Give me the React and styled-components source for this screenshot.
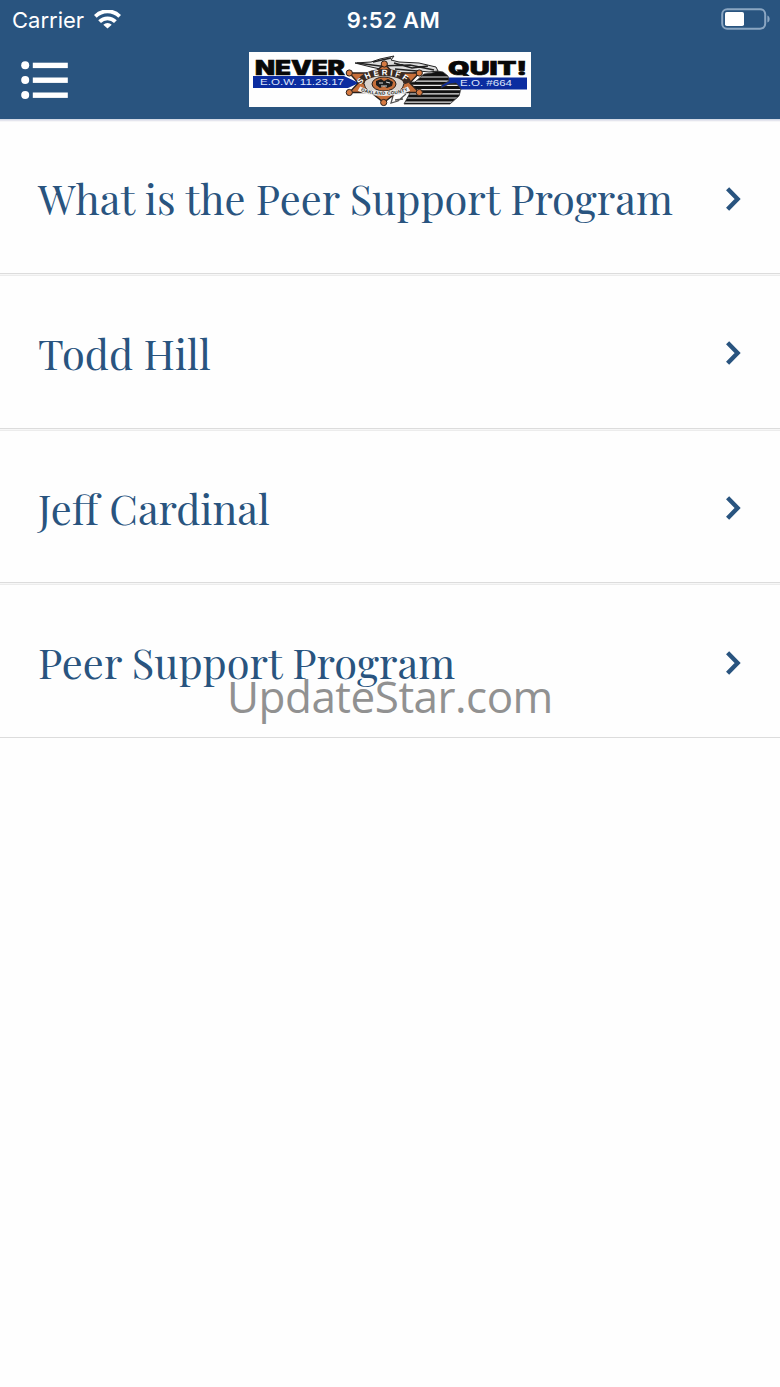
import React from 'react';
import styled, { createGlobalStyle } from 'styled-components'

const GlobalStyle=createGlobalStyle`
* { box-sizing: border-box; }
body {
    margin: 0;
    background: #fefefe;
}
`
const Screen=styled.div`
    position: relative;
    width: 780px;
    height: 1387px;
    overflow: hidden;
    background: #fefefe;
`
const Header=styled.header`
    position: relative;
    height: 119.4px;
    background: #29547f;
    box-shadow: 0 1px 0 #d3dae6, 0 2px 0 #e4e5ee, 0 3px 0 #f6f6f8;
    color: white;
`
const StatusBar=styled.div`
    display: grid;
    grid-template-columns: 1fr auto 1fr;
    align-items: center;
    height: 40px;
    padding: 0 10px 0 12px;
    font-family: Inter, "Liberation Sans", sans-serif;
    font-size: 22px;
`
const Carrier=styled.div`
    display: flex;
    align-items: center;
    gap: 10px;
`
const Time=styled.div`
    font-weight: 600;
    letter-spacing: 0.4px;
    padding-left: 5px;
`
const Battery=styled.svg`
    justify-self: end;
    margin-bottom: 2px;
`
const NavBar=styled.div`
    display: grid;
    grid-template-columns: 1fr 282px 1fr;
    align-items: center;
    height: 79px;
    padding: 0 20px;
`
const MenuButton=styled.button`
    display: flex;
    justify-self: start;
    padding: 0;
    border: 0;
    background: none;
`
const List=styled.ul`
    list-style: none;
    margin: 0;
    padding: 0;
`
const Row=styled.li`
    display: flex;
    align-items: center;
    justify-content: space-between;
    height: 154.66px;
    padding: 5px 38px 0 38px;
    border-bottom: 1px solid #dcdcdc;
    color: #29547f;
    &:not(:last-child) {
        box-shadow: 0 1px 0 #f7f7f7, 0 2px 0 #ececec;
    }
`
const Title=styled.span`
    font-family: "Playfair Display", "Liberation Serif", serif;
    font-size: 41.55px;
    line-height: 60px;
    margin-bottom: 1px;
    white-space: nowrap;
`
const Watermark=styled.div`
    position: absolute;
    top: 666px;
    left: 227px;
    font-family: "Open Sans", "Noto Sans", sans-serif;
    font-size: 44px;
    line-height: 60px;
    letter-spacing: -0.5px;
    color: #919191;
`
const rows=[
    'What is the Peer Support Program',
    'Todd Hill',
    'Jeff Cardinal',
    'Peer Support Program',
]

const Wifi = () => (
    <svg width="27" height="20" viewBox="0 0 27 20" fill="none" stroke="white" strokeWidth="3.9">
        <path d="M1.3 6.4a17.2 17.2 0 0 1 24.4 0" />
        <path d="M5.6 11.6a11.2 11.2 0 0 1 15.8 0" />
        <path d="M13.5 18.6l-4.2-3.8a6 6 0 0 1 8.4 0z" fill="white" stroke="none" />
    </svg>
)
const BatteryIcon = () => (
    <Battery width="50" height="22" viewBox="0 0 50 22">
        <rect x="2.2" y="1.3" width="43" height="19.4" rx="5" fill="none" stroke="#8ba6c2" strokeWidth="2" />
        <rect x="5" y="4" width="19" height="14" rx="1.8" fill="white" />
        <path d="M47.4 7.5c3 1 3 6 0 7z" fill="#8ba6c2" />
    </Battery>
)
const MenuIcon = () => (
    <svg width="48" height="38" viewBox="0 0 48 38" fill="white">
        {[4.2, 19, 34].map(y => (
            <g key={y}>
                <circle cx="5.2" cy={y} r="4" />
                <rect x="12.8" y={y - 2.5} width="35" height="5.4" />
            </g>
        ))}
    </svg>
)
const Chevron = () => (
    <svg width="18" height="26" viewBox="0 0 18 26" fill="none" stroke="#29547f" strokeWidth="4.4">
        <path d="M3.6 2.8L13.6 13 3.6 23.2" />
    </svg>
)
// outer tips of the badge, each one ends in a ball
const tips=[[135.3, 12], [170.3, 21], [170.3, 40.5], [134.7, 50.5], [100.3, 40.5], [100.3, 21]]

const Logo = () => (
    <svg width="282" height="55" viewBox="0 0 282 55">
        <defs>
            <clipPath id="mitten">
                <path d="M150 31l16-1 9-8 8-1 5-2 6 1 5 4 1 5-7 4-1 3 8-4 7-1 5 6-2 7-9 8h-46l7-13z" />
            </clipPath>
        </defs>
        <rect width="282" height="55" fill="#fefefe" />
        <g fontFamily='Inter, "Liberation Sans", sans-serif' fontWeight="900" fill="#080808" stroke="#080808" strokeWidth="0.6">
            <text x="6" y="22.8" fontSize="19.6" textLength="90" lengthAdjust="spacingAndGlyphs">NEVER</text>
            <text x="199" y="23" fontSize="18.2" textLength="79" lengthAdjust="spacingAndGlyphs">QUIT!</text>
        </g>
        <path d="M4 24h91l15 7-11 5H4z" fill="#0b2ca0" />
        <path d="M193 25.5h85v12h-92l2-5z" fill="#0b2ca0" />
        <g fontFamily='"Liberation Sans", Arial, sans-serif' fill="#dce4fa">
            <text x="11" y="33.2" fontSize="9.6" textLength="84" lengthAdjust="spacingAndGlyphs">E.O.W. 11.23.17</text>
            <text x="211" y="34.2" fontSize="9.6" textLength="52" lengthAdjust="spacingAndGlyphs">E.O. #664</text>
        </g>
        <g clipPath="url(#mitten)">
            <rect x="145" y="15" width="66" height="40" fill="#111" />
            <path d="M145 25h66M145 29.2h66M145 33.4h66M145 37.6h66M145 41.8h66M145 46h66M145 50.2h66" stroke="#e6e6e6" strokeWidth="1.2" />
        </g>
        <path d="M150 31l16-1 9-8 8-1 5-2 6 1 5 4 1 5-7 4-1 3 8-4 7-1 5 6-2 7-9 8h-46l7-13z" fill="none" stroke="#333" strokeWidth="0.8" />
        <path d="M106 11l16-1 9-3 14-3-3 4 8 2 20 1 17 4 2 4-9 1-10-1-8 3-22-3-18-4z" fill="#ddd" stroke="#222" strokeWidth="1" />
        <path d="M108 11l23 3 30-1 24 5M124 10l18-4M145 11l18 5 16-2M146 17l22 2" fill="none" stroke="#222" strokeWidth="1.5" />
        <path d="M144 44l-2 7 7-2 8-7M146 48l8-1" fill="none" stroke="#555" strokeWidth="1.3" />
        <path d="M135.3 12l9.500 9h25.500l-9.500 10 9.500 9.500h-22.500l-13.100 10-12.700-10h-21.700l9-9.500-9-10h25z" fill="#c66f3a" stroke="#2b211c" strokeWidth="1.4" />
        {tips.map(([x, y]) => (
            <circle key={x + '-' + y} cx={x} cy={y} r="3.1" fill="#d57a42" stroke="#2b211c" strokeWidth="1" />
        ))}
        <ellipse cx="135" cy="31.500" rx="20" ry="11.500" fill="#d9d4cf" stroke="#2b211c" strokeWidth="1" />
        <ellipse cx="135" cy="32" rx="12" ry="7" fill="#c66f3a" stroke="#2b211c" strokeWidth="1" />
        <path d="M127 29l5-2 3 2 4-2 5 3-1 4-5 2-3-2-4 2-4-3z" fill="#1c1c1c" />
        <path d="M130 31h4M137 30l4 1M132 34h6" stroke="#ddd" strokeWidth="1" />
        <path d="M111 31c5-14 43-14 48 0" fill="none" stroke="#3a2a22" strokeWidth="7" />
        <path id="badgeText" d="M112 33c5-13 42-13 47 0" fill="none" />
        <path id="badgeBottom" d="M110 38c12 6.500 38 6.500 50 0" fill="none" />
        <path d="M110 36.600c12 6.500 38 6.500 50 0" fill="none" stroke="#eee" strokeWidth="5" />
        <g fontFamily='"Liberation Sans", Arial, sans-serif' fontWeight="700">
            <text fontSize="8" fill="white"><textPath href="#badgeText" textLength="49">SHERIFF</textPath></text>
            <text fontSize="4.600" fill="#222"><textPath href="#badgeBottom" startOffset="2" textLength="48">OAKLAND COUNTY</textPath></text>
        </g>
    </svg>
)
const App = () => {
    return (
        <Screen>
        <GlobalStyle />
        <Header>
        <StatusBar>
        <Carrier>Carrier<Wifi /></Carrier>
        <Time>9:52 AM</Time>
        <BatteryIcon />
        </StatusBar>
        <NavBar>
        <MenuButton aria-label="Menu"><MenuIcon /></MenuButton>
        <Logo />
        </NavBar>
        </Header>
        <List>
        {rows.map(title => (
            <Row key={title}>
            <Title>{title}</Title>
            <Chevron />
            </Row>
        ))}
        </List>
        <Watermark>UpdateStar.com</Watermark>
        </Screen>
    );
};

export default App;
